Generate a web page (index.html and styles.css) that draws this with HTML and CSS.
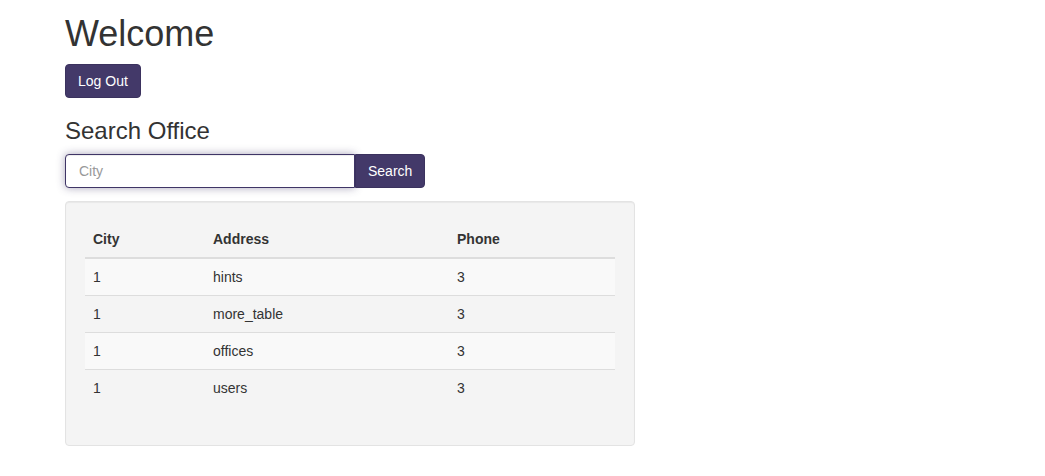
FILE: index.html
```html
<!DOCTYPE html>
<html>
<head>
<meta charset="utf-8">
<link rel="stylesheet" href="styles.css">
</head>
<body>
<div class="container">
  <h1 class="title">Welcome</h1>
  <button class="btn">Log Out</button>
  <h3 class="subtitle">Search Office</h3>
  <div class="input-group">
    <input class="form-control" type="text" placeholder="City" autofocus>
    <button class="btn btn-addon">Search</button>
  </div>
  <div class="well">
    <table class="table">
      <thead>
        <tr><th class="c1">City</th><th class="c2">Address</th><th class="c3">Phone</th></tr>
      </thead>
      <tbody>
        <tr class="odd"><td>1</td><td>hints</td><td>3</td></tr>
        <tr><td>1</td><td>more_table</td><td>3</td></tr>
        <tr class="odd"><td>1</td><td>offices</td><td>3</td></tr>
        <tr><td>1</td><td>users</td><td>3</td></tr>
      </tbody>
    </table>
  </div>
</div>
</body>
</html>
```
FILE: styles.css
```css
html, body {
  margin: 0;
  padding: 0;
  background: #fff;
}
body {
  font-family: "Liberation Sans", Arial, sans-serif;
  font-size: 14px;
  line-height: 1.42857;
  color: #333;
}
.container {
  padding: 14px 0 0 65px;
}
.title {
  font-size: 36px;
  font-weight: 500;
  line-height: 1.1;
  margin: 0 0 10px 0;
}
.btn {
  display: block;
  font-family: inherit;
  font-size: 14px;
  line-height: 20px;
  padding: 6px 12px;
  color: #fff;
  background: #433969;
  border: 1px solid #3b325e;
  border-radius: 4px;
  cursor: pointer;
}
.subtitle {
  font-size: 24px;
  font-weight: 500;
  line-height: 1.1;
  margin: 20px 0 10px 0;
}
.input-group {
  display: flex;
  width: 360px;
}
.form-control {
  box-sizing: border-box;
  width: 290px;
  height: 34px;
  padding: 6px 13px;
  font-family: inherit;
  font-size: 14px;
  line-height: 20px;
  color: #555;
  background: #fff;
  border: 1px solid #3f3566;
  border-radius: 4px 0 0 4px;
  box-shadow: inset 0 1px 1px rgba(0,0,0,.075), 0 0 8px rgba(67,57,105,.45);
  outline: none;
  margin: 0;
}
.form-control::placeholder {
  color: #999;
}
.btn-addon {
  width: 70px;
  height: 34px;
  box-sizing: border-box;
  border-radius: 0 4px 4px 0;
  margin-left: 0;
}
.well {
  box-sizing: border-box;
  width: 570px;
  margin-top: 13px;
  padding: 19px;
  background: #f4f4f4;
  border: 1px solid #e3e3e3;
  border-radius: 4px;
  box-shadow: inset 0 1px 1px rgba(0,0,0,.05);
}
.table {
  width: 530px;
  border-collapse: collapse;
  border-spacing: 0;
  margin-bottom: 20px;
}
.table th, .table td {
  padding: 8px;
  line-height: 20px;
  text-align: left;
  vertical-align: top;
}
.table th {
  font-weight: bold;
  border-bottom: 2px solid #ddd;
}
.table td {
  border-top: 1px solid #ddd;
}
.table tbody tr:first-child td {
  border-top: 0;
}
.c1 { width: 104px; }
.c2 { width: 228px; }
.c3 { width: 150px; }
.table tr.odd td {
  background: #f9f9f9;
}
```
